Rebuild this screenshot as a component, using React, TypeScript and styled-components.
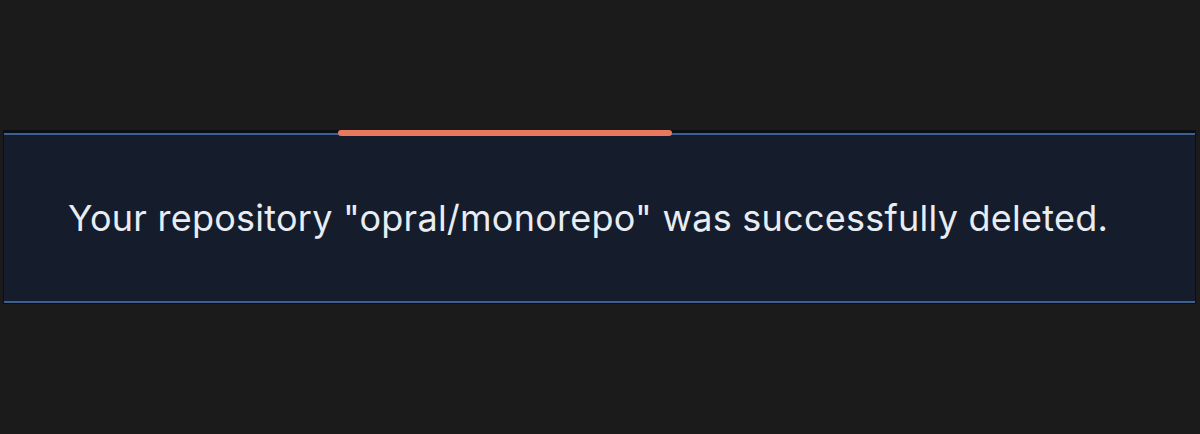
import styled, { createGlobalStyle } from 'styled-components'

const GlobalStyle = createGlobalStyle`
	html, body {
		margin: 0;
		padding: 0;
		background: #1b1b1b;
	}
	body {
		font-family: Inter, 'Liberation Sans', Arial, sans-serif;
	}
`

const SPage = styled.main`
	width: 100%;
	height: 434px;
	padding: 130px 4px 0 3px;
	box-sizing: border-box;
`
const SToast = styled.div`
	position: relative;
	height: 174px;
	box-sizing: border-box;
	background: #151c2b;
	border: 1px solid #0b0e15;
	border-top-width: 3px;
	box-shadow: inset 0 2px 0 #3e5f94, inset 0 -2px 0 #3e5f94;
	display: flex;
	align-items: center;
	padding: 0 0 0 64px;
`
const SProgress = styled.div`
	position: absolute;
	top: -3px;
	left: 334px;
	height: 6px;
	border-radius: 3px;
	background: #e8785e;
`
const SMessage = styled.p`
	margin: 0;
	color: #e8ecf3;
	font-size: 36px;
	letter-spacing: 0.25px;
`

export default function App() {
	const progress = 334

	return (
		<SPage>
			<GlobalStyle />
			<SToast role="status">
				<SProgress style={{ width: progress }} />
				<SMessage>Your repository "opral/monorepo" was successfully deleted.</SMessage>
			</SToast>
		</SPage>
	)
}
